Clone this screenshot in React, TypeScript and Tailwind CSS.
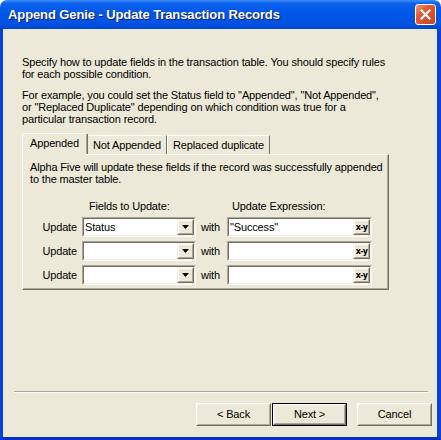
import React from "react";

function Sunken({ className, children }: { className?: string; children?: React.ReactNode }) {
  return (
    <div className={"border border-t-[#ACA899] border-l-[#ACA899] border-r-white border-b-white " + (className ?? "")}>
      <div className="h-full w-full border border-t-[#716F64] border-l-[#716F64] border-r-[#F1EFE2] border-b-[#F1EFE2] bg-white flex items-stretch">
        {children}
      </div>
    </div>
  );
}

function RaisedBtn({ children }: { children?: React.ReactNode }) {
  return (
    <div className="w-[17px] h-full border border-t-[#F1EFE2] border-l-[#F1EFE2] border-r-[#716F64] border-b-[#716F64] bg-[#ECE9D8]">
      <div className="h-full w-full border border-t-white border-l-white border-r-[#ACA899] border-b-[#ACA899] flex items-center justify-center">
        {children}
      </div>
    </div>
  );
}

function Combo({ value }: { value?: string }) {
  return (
    <Sunken className="w-[114px] h-[20px]">
      <div className="flex-1 pl-[1px] leading-[16px] text-black">{value}</div>
      <RaisedBtn>
        <svg width="7" height="4" viewBox="0 0 7 4">
          <path d="M0 0h7L3.5 4z" fill="#000" />
        </svg>
      </RaisedBtn>
    </Sunken>
  );
}

function Expr({ value }: { value?: string }) {
  return (
    <Sunken className="w-[145px] h-[20px]">
      <div className="flex-1 pl-[1px] leading-[16px] text-black">{value}</div>
      <RaisedBtn>
        <span className="text-[8px] font-bold leading-none tracking-[-0.7px] font-['DejaVu_Sans',sans-serif] mt-[1px]">x-y</span>
      </RaisedBtn>
    </Sunken>
  );
}

function Row({ value, expr }: { value?: string; expr?: string }) {
  return (
    <div className="flex items-center h-[20px]">
      <div className="w-[47px] text-right">Update</div>
      <div className="ml-[5px]">
        <Combo value={value} />
      </div>
      <div className="w-[31px] pl-[5px]">with</div>
      <Expr value={expr} />
    </div>
  );
}

function Button({ label, def }: { label: string; def?: boolean }) {
  return (
    <div className={"w-[75px] h-[23px] " + (def ? "border border-black" : "")}>
      <div className="h-full w-full border border-t-white border-l-white border-r-[#716F64] border-b-[#716F64] bg-[#ECE9D8]">
        <div className="h-full w-full border border-t-[#F1EFE2] border-l-[#F1EFE2] border-r-[#ACA899] border-b-[#ACA899] flex items-center justify-center">
          {label}
        </div>
      </div>
    </div>
  );
}

export default function App() {
  return (
    <div className="w-[441px] h-[440px] flex flex-col font-['Liberation_Sans',Arial,sans-serif] text-[11px] tracking-[-0.15px] text-black overflow-hidden bg-white whitespace-nowrap">
      {/* Title bar */}
      <div className="h-[29px] rounded-t-[7px] bg-[linear-gradient(to_bottom,#3D8DF8_0%,#0C62EE_12%,#0056E6_45%,#0053E2_80%,#0046D2_100%)] flex items-center pl-[8px] pr-[5px] shrink-0">
        <div className="flex-1 text-white font-bold text-[13px] leading-none tracking-[-0.1px] [text-shadow:1px_1px_0_#0A1883]">
          Append Genie - Update Transaction Records
        </div>
        <div className="w-[21px] h-[21px] rounded-[3px] border border-white bg-[linear-gradient(135deg,#F09A7A_0%,#E25A34_35%,#CC4420_100%)] flex items-center justify-center">
          <svg width="11" height="11" viewBox="0 0 11 11">
            <path d="M1.5 1.5L9.5 9.5M9.5 1.5L1.5 9.5" stroke="#fff" strokeWidth="2.2" strokeLinecap="square" />
          </svg>
        </div>
      </div>
      {/* Body */}
      <div className="flex-1 bg-[#ECE9D8] border-l-[3px] border-r-[4px] border-b-[3px] border-l-[#0842D6] border-r-[#0842D6] border-b-[#0530C8] flex flex-col">
        <div className="pl-[19px] leading-[12px] mt-[27px]">
          <p>Specify how to update fields in the transaction table. You should specify rules</p>
          <p>for each possible condition.</p>
        </div>
        <div className="pl-[19px] leading-[12px] mt-[9px]">
          <p>For example, you could set the Status field to "Appended", "Not Appended",</p>
          <p>or "Replaced Duplicate" depending on which condition was true for a</p>
          <p>particular transaction record.</p>
        </div>

        {/* Tabs */}
        <div className="ml-[19px] mt-[8px] flex items-end h-[21px] relative z-10">
          <div className="w-[64px] h-[22px] -mb-[1px] bg-[#ECE9D8] border-t border-l border-white rounded-tl-[2px] relative flex items-center justify-center pb-[2px]">
            Appended
            <div className="absolute right-[-2px] top-0 bottom-[1px] w-[2px] border-r border-[#716F64] shadow-[inset_-1px_0_0_#ACA899]" />
          </div>
          <div className="ml-[1px] w-[80px] h-[19px] border-t border-l border-white border-r border-r-[#716F64] flex items-center justify-center">
            Not Appended
          </div>
          <div className="w-[103px] h-[19px] border-t border-l border-white border-r border-r-[#716F64] flex items-center justify-center">
            Replaced duplicate
          </div>
        </div>
        <div className="ml-[19px] w-[367px] h-[136px] border-t border-l border-white border-r border-b border-r-[#716F64] border-b-[#716F64] shadow-[inset_-1px_-1px_0_#ACA899] pt-[6px] pl-[7px] leading-[12px]">
          <p>Alpha Five will update these fields if the record was successfully appended</p>
          <p>to the master table.</p>
          <div className="flex mt-[15px] leading-[12px]">
            <div className="ml-[59px] w-[138px]">Fields to Update:</div>
            <div className="ml-[5px]">Update Expression:</div>
          </div>
          <div className="mt-[5px] flex flex-col gap-[4px]">
            <Row value="Status" expr={'"Success"'} />
            <Row />
            <Row />
          </div>
        </div>

        {/* Separator */}
        <div className="ml-[11px] mr-[9px] mt-[101px] h-[2px] border-t border-[#ACA899] border-b border-b-white" />

        {/* Buttons */}
        <div className="mt-[10px] flex justify-end pr-[5px]">
          <Button label="< Back" />
          <div className="ml-[1px]">
            <Button label="Next >" def />
          </div>
          <div className="ml-[10px]">
            <Button label="Cancel" />
          </div>
        </div>
      </div>
    </div>
  );
}
